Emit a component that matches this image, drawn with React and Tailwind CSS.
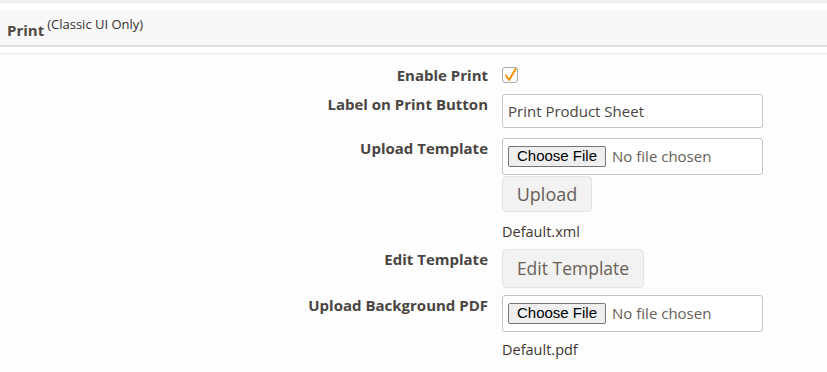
import React from 'react';

function FileField() {
  return (
    <div className="w-[261px] h-[37px] border border-[#c9c2ba] rounded-[3px] bg-white flex items-center pl-[5px]">
      <span className="h-[21px] px-[8px] flex items-center border border-[#767676] rounded-[2px] bg-[#efefef] text-[15px] text-black font-['Liberation_Sans',Arial,sans-serif]">
        Choose File
      </span>
      <span className="ml-[6px] text-[15px] text-[#676056]">No file chosen</span>
    </div>
  );
}

function Row({ label, top, children }) {
  return (
    <div className={`flex ${top}`}>
      <div className="w-[488px] text-right text-[15px] font-bold text-[#4a4542] leading-[20px]">{label}</div>
      <div className="pl-[14px] flex flex-col items-start">{children}</div>
    </div>
  );
}

export default function App() {
  return (
    <div className="w-[827px] h-[372px] bg-[#fdfdfd] font-['Open_Sans',sans-serif] text-[#41362f] overflow-hidden">
      <div className="h-[2px] bg-[#f3f3f3]" />
      <div className="h-[1px] bg-[#ececec]" />
      <div className="h-[7px] bg-white" />
      <div className="h-[37px] bg-[#f8f8f8] border-b-2 border-[#e0e0e0] flex items-center pl-[7px]">
        <span className="text-[15px] font-bold text-[#514943] mt-[6px]">Print</span>
        <span className="text-[13px] text-[#303030] ml-[3px] -mt-[6px]">(Classic UI Only)</span>
      </div>
      <div className="h-[6px] bg-white" />
      <div className="h-[1px] bg-[#ececec]" />
      <div className="h-[317px] border-b border-[#ececec]">
        <Row label="Enable Print" top="mt-[11px]">
          <div className="w-[16px] h-[16px] mt-[2px] border border-[#a9a9a9] rounded-[3px] bg-white flex items-center justify-center">
            <svg width="13" height="14" viewBox="0 0 13 14">
              <path d="M2 7.5 L5.2 12 L11.5 1" fill="none" stroke="#f29300" strokeWidth="2" strokeLinecap="round" strokeLinejoin="round" />
            </svg>
          </div>
        </Row>
        <Row label="Label on Print Button" top="mt-[9px]">
          <div className="w-[261px] h-[34px] border border-[#c9c2ba] rounded-[3px] bg-white flex items-center px-[5px] text-[15px] text-[#4a4542]">
            Print Product Sheet
          </div>
        </Row>
        <Row label="Upload Template" top="mt-[10px]">
          <FileField />
          <button className="mt-[1px] w-[90px] h-[36px] bg-[#f2f2f2] border border-[#e3e3e3] rounded-[4px] text-[18px] text-[#676056]">
            Upload
          </button>
          <div className="mt-[10px] text-[14.5px] leading-[20px] text-[#41362f]">Default.xml</div>
        </Row>
        <Row label="Edit Template" top="mt-[7px]">
          <button className="w-[142px] h-[39px] bg-[#f2f2f2] border border-[#e3e3e3] rounded-[4px] text-[17.5px] text-[#676056]">
            Edit Template
          </button>
        </Row>
        <Row label="Upload Background PDF" top="mt-[7px]">
          <FileField />
          <div className="mt-[8px] text-[14.5px] leading-[20px] text-[#41362f]">Default.pdf</div>
        </Row>
      </div>
    </div>
  );
}
